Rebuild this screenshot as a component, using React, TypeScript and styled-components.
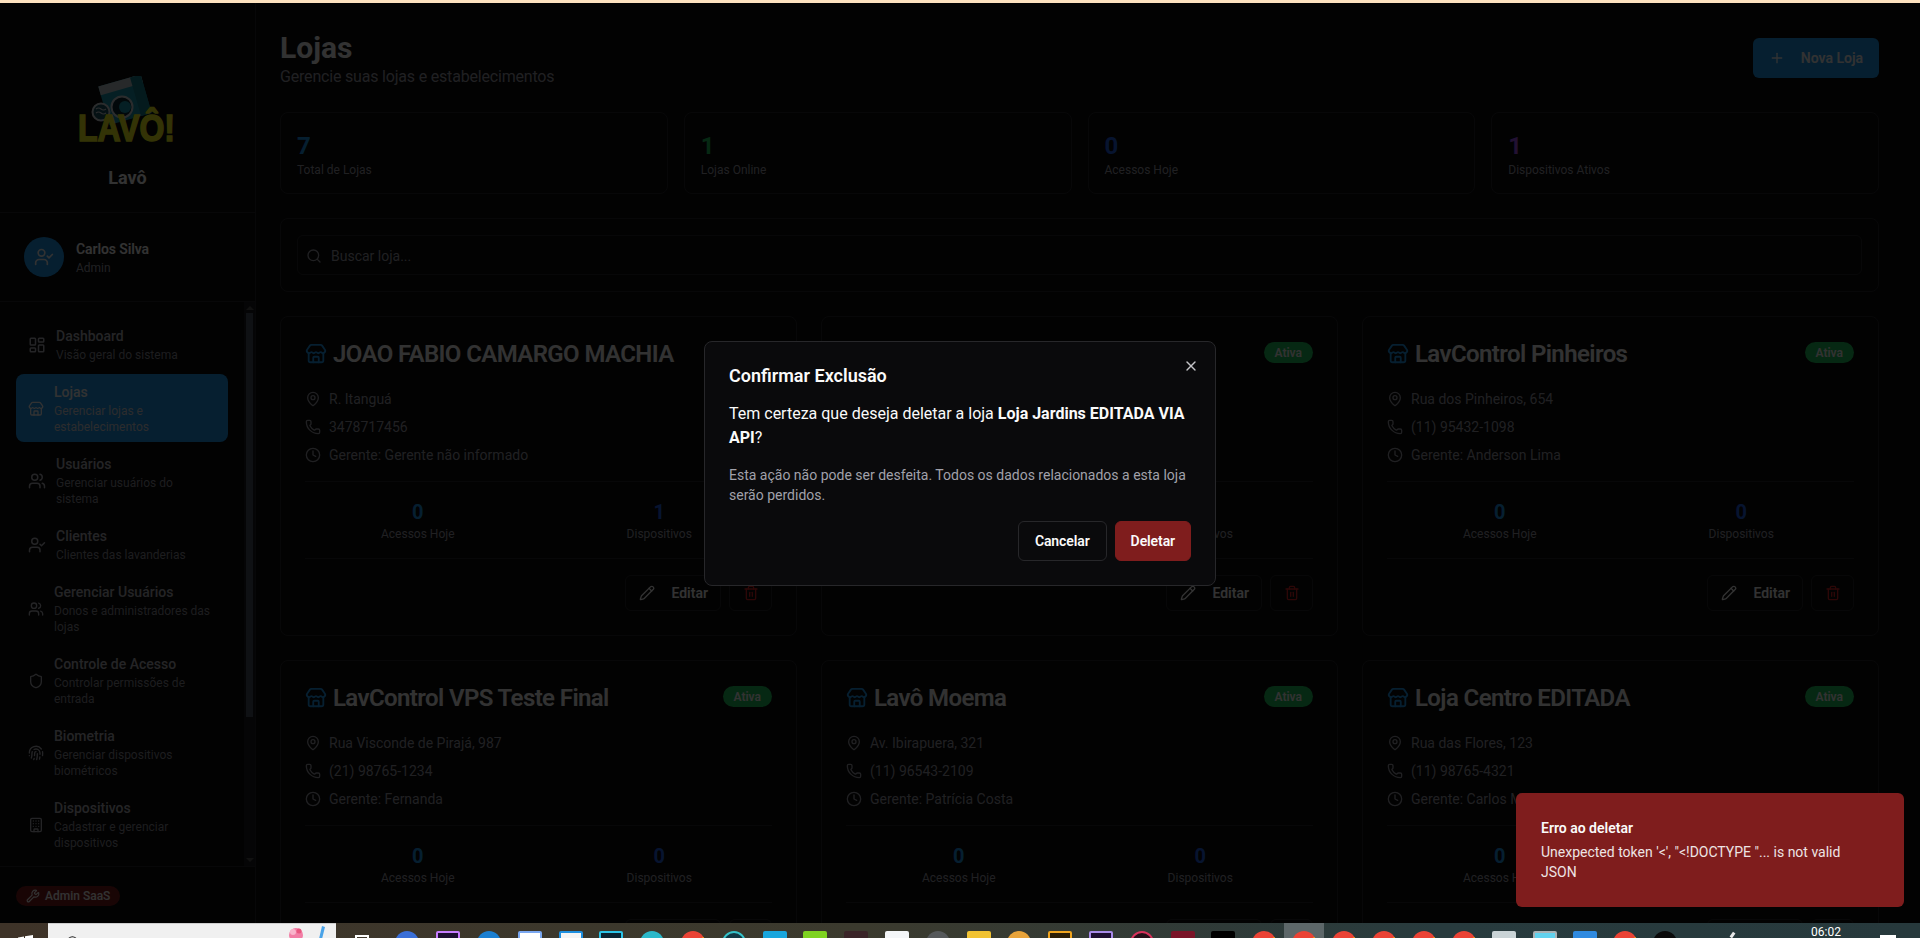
import * as React from "react";
import styled, { createGlobalStyle } from "styled-components";
import {
  Building, Clock, Fingerprint, LayoutDashboard, MapPin, Pencil, Phone, Plus, Search, Shield,
  Store, Trash2, UserCheck, Users, Wrench, X,
} from "lucide-react";

const uiFont = `Roboto, "Noto Sans", sans-serif`;

const GlobalStyle = createGlobalStyle`
  html, body {
    margin: 0;
    height: 100%;
    overflow: hidden;
    background: #000;
  }

  body {
    font-family: ${uiFont};
    color: #fafafa;
  }

  * {
    box-sizing: border-box;
  }
`;

const border = "#27272a";
const primary = "#1f9bf0";

const Desktop = styled.div`
  display: flex;
  flex-direction: column;
  height: 938px;
  overflow: hidden;
`;

const ChromeEdge = styled.div`
  flex: 0 0 3px;
  background: #fde2bf;
`;

const Viewport = styled.div`
  position: relative;
  flex: 1;
  min-height: 0;
  display: flex;
  overflow: hidden;
  background: #0a0a0b;
`;

/* sidebar */

const Sidebar = styled.aside`
  flex: 0 0 256px;
  display: flex;
  flex-direction: column;
  border-right: 1px solid ${border};
`;

const Brand = styled.div`
  display: flex;
  flex-direction: column;
  align-items: center;
  padding: 73px 0 20px;
  border-bottom: 1px solid ${border};
`;

const BrandName = styled.div`
  margin-top: 18px;
  font-size: 18px;
  line-height: 28px;
  font-weight: 700;
`;

const Profile = styled.div`
  display: flex;
  align-items: center;
  gap: 12px;
  padding: 24px;
  border-bottom: 1px solid ${border};
`;

const Avatar = styled.div`
  width: 40px;
  height: 40px;
  border-radius: 50%;
  background: ${primary};
  display: flex;
  align-items: center;
  justify-content: center;
`;

const ProfileName = styled.div`
  margin-top: 1px;
  font-size: 14px;
  line-height: 20px;
  font-weight: 600;
  letter-spacing: -0.1px;
`;

const ProfileRole = styled.div`
  font-size: 12px;
  line-height: 16px;
  margin-top: 1px;
  color: #a1a1aa;
`;

const NavArea = styled.div`
  flex: 1;
  min-height: 0;
  display: flex;
`;

const NavList = styled.nav`
  flex: 1;
  min-width: 0;
  display: flex;
  flex-direction: column;
  gap: 4px;
  padding: 16px 16px 8px;
  overflow: hidden;
`;

const NavItem = styled.a<{ $active?: boolean }>`
  display: flex;
  align-items: center;
  gap: 10px;
  padding: 8px 12px 7px;
  border-radius: 8px;
  color: ${props => (props.$active ? "#fafafa" : "#b6b6bd")};
  background: ${props => (props.$active ? primary : "transparent")};

  svg {
    flex: none;
  }
`;

const NavTitle = styled.div`
  font-size: 14px;
  line-height: 20px;
  font-weight: 500;
`;

const NavDesc = styled.div<{ $active?: boolean }>`
  margin-top: 1px;
  font-size: 12px;
  line-height: 16px;
  color: ${props => (props.$active ? "#d9d9de" : "#8f8f98")};
`;

const Rail = styled.div`
  flex: 0 0 11px;
  display: flex;
  flex-direction: column;
  align-items: center;
  background: #1d1d20;
`;

const RailArrow = styled.div<{ $down?: boolean }>`
  flex: 0 0 4px;
  width: 0;
  height: 0;
  border-left: 4px solid transparent;
  border-right: 4px solid transparent;
  ${props => (props.$down
    ? "border-top: 4px solid #555; margin-top: auto; margin-bottom: 4px;"
    : "border-bottom: 4px solid #555; margin: 4px 0 3px;")}
`;

const RailThumb = styled.div`
  width: 7px;
  height: 404px;
  background: #4d5566;
`;

const SidebarFoot = styled.div`
  flex: 0 0 57px;
  padding: 19px 16px 0;
  border-top: 1px solid ${border};
`;

const AdminPill = styled.span`
  display: inline-flex;
  align-items: center;
  gap: 5px;
  height: 20px;
  padding: 0 10px;
  border-radius: 10px;
  font-size: 12px;
  font-weight: 500;
  background: #7f1d1d;
`;

/* main */

const Main = styled.main`
  flex: 1;
  min-width: 0;
  padding: 25px 41px 0 24px;
  overflow: hidden;
`;

const PageHead = styled.header`
  display: flex;
  align-items: center;
  justify-content: space-between;
  margin-bottom: 24px;
`;

const PageTitle = styled.h1`
  margin: 2px 0 0;
  font-size: 30px;
  line-height: 35px;
  font-weight: 700;
`;

const PageSub = styled.p`
  margin: 0;
  font-size: 16px;
  line-height: 23px;
  letter-spacing: -0.19px;
  color: #a1a1aa;
`;

const PrimaryButton = styled.button`
  display: flex;
  align-items: center;
  gap: 16px;
  height: 40px;
  padding: 0 16px;
  border: 0;
  border-radius: 6px;
  background: ${primary};
  color: #fafafa;
  font: 600 14px ${uiFont};
`;

const StatGrid = styled.section`
  display: grid;
  grid-template-columns: repeat(4, 1fr);
  gap: 16px;
  margin-bottom: 24px;
`;

const Panel = styled.div`
  border: 1px solid ${border};
  border-radius: 8px;
`;

const StatCard = styled(Panel)`
  padding: 17px 16px 15px;
`;

const StatValue = styled.div<{ $color: string }>`
  font-size: 24px;
  line-height: 32px;
  font-weight: 700;
  color: ${props => props.$color};
`;

const StatLabel = styled.div`
  font-size: 12px;
  line-height: 16px;
  color: #a1a1aa;
`;

const SearchPanel = styled(Panel)`
  padding: 16px;
  margin-bottom: 24px;
`;

const SearchField = styled.div`
  display: flex;
  align-items: center;
  gap: 9px;
  height: 40px;
  padding: 1px 8px 0;
  border: 1px solid ${border};
  border-radius: 6px;
  font-size: 14px;
  color: #a1a1aa;
`;

const StoreGrid = styled.section`
  display: grid;
  grid-template-columns: repeat(3, 1fr);
  gap: 24px;
`;

const StoreCard = styled(Panel)`
  height: 320px;
  padding: 25px 24px 24px;
`;

const StoreHead = styled.div`
  display: flex;
  align-items: flex-start;
  justify-content: space-between;
  height: 24px;
  margin-bottom: 23px;
`;

const StoreTitle = styled.h3`
  display: flex;
  align-items: center;
  gap: 6px;
  margin: 0;
  font-size: 24px;
  line-height: 24px;
  font-weight: 600;
  letter-spacing: -0.6px;
  white-space: nowrap;

  svg {
    color: ${primary};
    flex: none;
  }
`;

const Badge = styled.span`
  height: 21px;
  padding: 1px 11px 0;
  border-radius: 11px;
  font-size: 12px;
  line-height: 20px;
  font-weight: 600;
  background: #22c55e;
`;

const InfoList = styled.div`
  display: flex;
  flex-direction: column;
  gap: 8px;
`;

const InfoRow = styled.div`
  display: flex;
  align-items: center;
  gap: 8px;
  font-size: 14px;
  line-height: 20px;
  color: #a1a1aa;
`;

const Figures = styled.div`
  display: grid;
  grid-template-columns: 1fr 1fr;
  gap: 16px;
  margin-top: 16px;
  padding: 16px 0;
  border-top: 1px solid ${border};
  border-bottom: 1px solid ${border};
  text-align: center;
`;

const FigureValue = styled.div<{ $color: string }>`
  font-size: 20px;
  line-height: 28px;
  font-weight: 700;
  color: ${props => props.$color};
`;

const FigureLabel = styled.div`
  font-size: 12px;
  line-height: 16px;
  color: #a1a1aa;
`;

const CardActions = styled.div`
  display: flex;
  justify-content: flex-end;
  gap: 8px;
  padding-top: 16px;
`;

const OutlineButton = styled.button<{ $danger?: boolean }>`
  display: flex;
  align-items: center;
  gap: 16px;
  height: 36px;
  padding: 0 12px 0 13px;
  background: transparent;
  border: 1px solid ${border};
  border-radius: 6px;
  color: ${props => (props.$danger ? "#dc2626" : "#fafafa")};
  font: 600 14px ${uiFont};
`;

/* overlay */

const Backdrop = styled.div`
  position: absolute;
  inset: 0;
  display: flex;
  align-items: center;
  justify-content: center;
  background: rgba(0, 0, 0, 0.8);
`;

const Dialog = styled.div`
  position: relative;
  width: 512px;
  padding: 24px;
  background: #0a0a0c;
  border: 1px solid ${border};
  border-radius: 8px;
`;

const DialogClose = styled.span`
  position: absolute;
  top: 16px;
  right: 16px;
  display: flex;
  color: #c4c4c8;
`;

const DialogTitle = styled.h2`
  margin: 0 0 16px;
  font-size: 18px;
  line-height: 20px;
  font-weight: 600;
`;

const DialogText = styled.p`
  margin: 0;
  font-size: 16px;
  line-height: 24px;

  strong {
    font-weight: 700;
  }
`;

const DialogNote = styled.p`
  margin: 15px 0 15px;
  font-size: 14px;
  line-height: 20.5px;
  color: #a1a1aa;
`;

const DialogActions = styled.div`
  display: flex;
  justify-content: flex-end;
  gap: 8px;
`;

const DialogButton = styled.button<{ $danger?: boolean }>`
  height: 40px;
  padding: 0 ${props => (props.$danger ? 15 : 16)}px;
  border: 1px solid ${props => (props.$danger ? "#7f1d1d" : border)};
  border-radius: 6px;
  background: ${props => (props.$danger ? "#7f1d1d" : "transparent")};
  color: #fafafa;
  font: 600 14px ${uiFont};
  letter-spacing: -0.1px;
`;

const Toast = styled.div`
  position: absolute;
  right: 16px;
  bottom: 16px;
  width: 388px;
  padding: 25px;
  border-radius: 6px;
  background: #7f1d1d;
  font-size: 14px;
  line-height: 20px;
`;

const ToastTitle = styled.div`
  font-weight: 600;
  margin-bottom: 4px;
`;

const ToastText = styled.div`
  opacity: 0.9;
`;

/* taskbar */

const Taskbar = styled.footer`
  flex: 0 0 15px;
  display: flex;
  overflow: hidden;
  background: linear-gradient(90deg, #3e3328 0%, #3b3a2e 45%, #283b3e 75%, #27393c 100%);
`;

const StartSlot = styled.div`
  flex: 0 0 48px;
  padding: 12px 0 0 18px;
`;

const SearchBox = styled.div`
  flex: 0 0 288px;
  display: flex;
  align-items: flex-start;
  padding: 11px 0 0 18px;
  background: #f0f0f0;
  border-top: 1px solid #cfcfcf;
`;

const TaskSlot = styled.div<{ $w: number; $active?: boolean }>`
  flex: 0 0 ${props => props.$w}px;
  display: flex;
  justify-content: center;
  padding-top: 8px;
  background: ${props => (props.$active ? "#5d6769" : "transparent")};
`;

const TaskView = styled.div`
  flex: none;
  width: 14px;
  height: 24px;
  margin-top: 4px;
  border: 2px solid #fff;
`;

const TaskGlyph = styled.div<{ $bg: string; $line?: string; $round?: boolean }>`
  flex: none;
  width: 24px;
  height: 24px;
  background: ${props => props.$bg};
  border: ${props => (props.$line ? `2px solid ${props.$line}` : "0")};
  border-radius: ${props => (props.$round ? "50%" : "2px")};
`;

const Tray = styled.div`
  margin-left: auto;
  display: flex;
  align-items: flex-start;
`;

const TrayPen = styled.div`
  width: 3px;
  height: 6px;
  margin: 9px 72px 0 0;
  background: #e8e8e8;
  transform: rotate(35deg);
`;

const ClockText = styled.div`
  width: 40px;
  margin-right: 34px;
  font-size: 12px;
  line-height: 16px;
  margin-top: 1px;
  text-align: center;
  color: #fff;
`;

const NotifyBox = styled.div`
  width: 16px;
  height: 4px;
  margin: 12px 24px 0 0;
  background: #fff;
`;

function LavoLogo() {
  return (
    <svg width="100" height="70" viewBox="0 0 100 70">
      <g transform="rotate(-16 46 24)">
        <rect x="25" y="4" width="44" height="40" fill="#1c9db3" />
        <rect x="25" y="4" width="44" height="9" fill="#c4ced1" />
        <rect x="58" y="4" width="11" height="40" fill="#17808f" />
      </g>
      <circle cx="44" cy="31" r="10.5" fill="#0d2b33" stroke="#d7dde0" strokeWidth="2" />
      <circle cx="47" cy="31" r="6" fill="#1c9db3" />
      <circle cx="23" cy="36" r="8.5" fill="#1b5563" stroke="#d7dde0" strokeWidth="2" />
      <path d="M18 33q2.5-2 5 0t5 0M18 37q2.5-2 5 0t5 0" fill="none" stroke="#d7dde0" strokeWidth="1.2" />
      <text
        x="0"
        y="65"
        fontFamily="'Liberation Sans', sans-serif"
        fontWeight="700"
        fontSize="36"
        textLength="97"
        lengthAdjust="spacingAndGlyphs"
        fill="#ffff20"
        stroke="#ffff20"
        strokeWidth="1.5"
      >
        LAVÔ!
      </text>
    </svg>
  );
}

function ChromeGlyph() {
  return (
    <svg width="24" height="24" viewBox="0 0 24 24">
      <circle cx="12" cy="12" r="12" fill="#ea4335" />
      <path d="M12 12l10.4-6A12 12 0 0 1 24 12a12 12 0 0 1-12 12z" fill="#fbbc05" />
      <circle cx="12" cy="12" r="5" fill="#fff" />
    </svg>
  );
}

function WindowsGlyph() {
  return (
    <svg width="15" height="15" viewBox="0 0 15 15" fill="#fff" style={{ display: "block" }}>
      <path d="M0 2.5l6-1V7H0zM7 1.3L15 0v7H7z" />
    </svg>
  );
}

function BingDoodle() {
  return (
    <svg width="42" height="15" viewBox="0 0 42 15" style={{ marginLeft: "auto", marginTop: -10, marginRight: 9 }}>
      <circle cx="11" cy="10" r="7" fill="#f27da5" />
      <circle cx="8" cy="7" r="3" fill="#f9b4cb" />
      <circle cx="14" cy="6" r="2.5" fill="#e8577f" />
      <path d="M37 1l3 1-3 12h-3z" fill="#4aa3e8" />
    </svg>
  );
}

type NavEntry = { icon: typeof Store, size: number, title: string, desc: string, active?: boolean };

const navItems: NavEntry[] = [
  { icon: LayoutDashboard, size: 18, title: "Dashboard", desc: "Visão geral do sistema" },
  { icon: Store, size: 16, title: "Lojas", desc: "Gerenciar lojas e estabelecimentos", active: true },
  { icon: Users, size: 18, title: "Usuários", desc: "Gerenciar usuários do sistema" },
  { icon: UserCheck, size: 18, title: "Clientes", desc: "Clientes das lavanderias" },
  { icon: Users, size: 16, title: "Gerenciar Usuários", desc: "Donos e administradores das lojas" },
  { icon: Shield, size: 16, title: "Controle de Acesso", desc: "Controlar permissões de entrada" },
  { icon: Fingerprint, size: 16, title: "Biometria", desc: "Gerenciar dispositivos biométricos" },
  { icon: Building, size: 16, title: "Dispositivos", desc: "Cadastrar e gerenciar dispositivos" },
];

const stats = [
  { value: "7", label: "Total de Lojas", color: "#1f9bf0" },
  { value: "1", label: "Lojas Online", color: "#22c55e" },
  { value: "0", label: "Acessos Hoje", color: "#2563eb" },
  { value: "1", label: "Dispositivos Ativos", color: "#a855f7" },
];

const stores = [
  { name: "JOAO FABIO CAMARGO MACHIA", address: "R. Itanguá", phone: "3478717456", manager: "Gerente não informado", devices: 1 },
  { name: "Loja Jardins EDITADA VIA API", address: "Alameda Santos, 456", phone: "(11) 97654-3210", manager: "Roberto Alves", devices: 0 },
  { name: "LavControl Pinheiros", address: "Rua dos Pinheiros, 654", phone: "(11) 95432-1098", manager: "Anderson Lima", devices: 0 },
  { name: "LavControl VPS Teste Final", address: "Rua Visconde de Pirajá, 987", phone: "(21) 98765-1234", manager: "Fernanda", devices: 0 },
  { name: "Lavô Moema", address: "Av. Ibirapuera, 321", phone: "(11) 96543-2109", manager: "Patrícia Costa", devices: 0 },
  { name: "Loja Centro EDITADA", address: "Rua das Flores, 123", phone: "(11) 98765-4321", manager: "Carlos Mendes", devices: 0 },
];

type TaskEntry = { w: number, bg?: string, line?: string, round?: boolean, chrome?: boolean, active?: boolean };

const narrow = 40;
const wide = 40.8;

const taskIcons: TaskEntry[] = [
  { w: wide, bg: "#3a6fd8", round: true },
  { w: wide, bg: "#1e0f33", line: "#c77dff" },
  { w: wide, bg: "#1b7fd1", round: true },
  { w: wide, bg: "#ffffff", line: "#7aa7f0" },
  { w: wide, bg: "#f4f4f4", line: "#1d8fe0" },
  { w: wide, bg: "#0a2433", line: "#2bc4e8" },
  { w: wide, bg: "#2bb8c9", round: true },
  { w: wide, chrome: true },
  { w: wide, bg: "#123a46", line: "#35c2c9", round: true },
  { w: wide, bg: "#19a6dd" },
  { w: wide, bg: "#7ed321" },
  { w: wide, bg: "#3a2428" },
  { w: wide, bg: "#f4f6f8" },
  { w: wide, bg: "#55585a", round: true },
  { w: wide, bg: "#f1c232" },
  { w: wide, bg: "#e8a33a", round: true },
  { w: wide, bg: "#2b1d05", line: "#f0a41e" },
  { w: wide, bg: "#1e0f33", line: "#a88bea" },
  { w: wide, bg: "#261019", line: "#d8315b", round: true },
  { w: wide, bg: "#7a1428" },
  { w: wide, bg: "#000000" },
  { w: narrow, chrome: true },
  { w: narrow, chrome: true, active: true },
  { w: narrow, chrome: true },
  { w: narrow, chrome: true },
  { w: narrow, chrome: true },
  { w: narrow, chrome: true },
  { w: wide, bg: "#c9d3d6" },
  { w: wide, bg: "#62d2ee", line: "#a9b2b5" },
  { w: narrow, bg: "#2f8ae0" },
  { w: narrow, chrome: true },
  { w: narrow, bg: "#0a0a0a", round: true },
];

function StoreTile({ store }: { store: typeof stores[number] }) {
  return (
    <StoreCard>
      <StoreHead>
        <StoreTitle>
          <Store size={22} />
          {store.name}
        </StoreTitle>
        <Badge>Ativa</Badge>
      </StoreHead>
      <InfoList>
        <InfoRow><MapPin size={16} />{store.address}</InfoRow>
        <InfoRow><Phone size={16} />{store.phone}</InfoRow>
        <InfoRow><Clock size={16} />Gerente: {store.manager}</InfoRow>
      </InfoList>
      <Figures>
        <div>
          <FigureValue $color="#1f9bf0">0</FigureValue>
          <FigureLabel>Acessos Hoje</FigureLabel>
        </div>
        <div>
          <FigureValue $color="#2563eb">{store.devices}</FigureValue>
          <FigureLabel>Dispositivos</FigureLabel>
        </div>
      </Figures>
      <CardActions>
        <OutlineButton><Pencil size={16} />Editar</OutlineButton>
        <OutlineButton $danger={true}><Trash2 size={16} /></OutlineButton>
      </CardActions>
    </StoreCard>
  );
}

export default function App() {
  return (
    <Desktop>
      <GlobalStyle />
      <ChromeEdge />
      <Viewport>
        <Sidebar>
          <Brand>
            <LavoLogo />
            <BrandName>Lavô</BrandName>
          </Brand>
          <Profile>
            <Avatar><UserCheck size={20} /></Avatar>
            <div>
              <ProfileName>Carlos Silva</ProfileName>
              <ProfileRole>Admin</ProfileRole>
            </div>
          </Profile>
          <NavArea>
            <NavList>
              {navItems.map(item => (
                <NavItem key={item.title} $active={item.active}>
                  <item.icon size={item.size} />
                  <div>
                    <NavTitle>{item.title}</NavTitle>
                    <NavDesc $active={item.active}>{item.desc}</NavDesc>
                  </div>
                </NavItem>
              ))}
            </NavList>
            <Rail>
              <RailArrow />
              <RailThumb />
              <RailArrow $down={true} />
            </Rail>
          </NavArea>
          <SidebarFoot>
            <AdminPill><Wrench size={14} />Admin SaaS</AdminPill>
          </SidebarFoot>
        </Sidebar>

        <Main>
          <PageHead>
            <div>
              <PageTitle>Lojas</PageTitle>
              <PageSub>Gerencie suas lojas e estabelecimentos</PageSub>
            </div>
            <PrimaryButton><Plus size={16} />Nova Loja</PrimaryButton>
          </PageHead>
          <StatGrid>
            {stats.map(stat => (
              <StatCard key={stat.label}>
                <StatValue $color={stat.color}>{stat.value}</StatValue>
                <StatLabel>{stat.label}</StatLabel>
              </StatCard>
            ))}
          </StatGrid>
          <SearchPanel>
            <SearchField>
              <Search size={16} color="#a1a1aa" />
              Buscar loja...
            </SearchField>
          </SearchPanel>
          <StoreGrid>
            {stores.map(store => <StoreTile key={store.name} store={store} />)}
          </StoreGrid>
        </Main>

        <Backdrop>
          <Dialog>
            <DialogClose><X size={16} /></DialogClose>
            <DialogTitle>Confirmar Exclusão</DialogTitle>
            <DialogText>
              Tem certeza que deseja deletar a loja <strong>Loja Jardins EDITADA VIA API</strong>?
            </DialogText>
            <DialogNote>
              Esta ação não pode ser desfeita. Todos os dados relacionados a esta loja serão perdidos.
            </DialogNote>
            <DialogActions>
              <DialogButton>Cancelar</DialogButton>
              <DialogButton $danger={true}>Deletar</DialogButton>
            </DialogActions>
          </Dialog>
        </Backdrop>

        <Toast>
          <ToastTitle>Erro ao deletar</ToastTitle>
          <ToastText>Unexpected token '&lt;', "&lt;!DOCTYPE "... is not valid JSON</ToastText>
        </Toast>
      </Viewport>

      <Taskbar>
        <StartSlot><WindowsGlyph /></StartSlot>
        <SearchBox>
          <Search size={14} color="#222" />
          <BingDoodle />
        </SearchBox>
        <TaskSlot $w={51}>
          <TaskView />
        </TaskSlot>
        {taskIcons.map((icon, i) => (
          <TaskSlot key={i} $w={icon.w} $active={icon.active}>
            {icon.chrome ? <ChromeGlyph /> : <TaskGlyph $bg={icon.bg || "#000"} $line={icon.line} $round={icon.round} />}
          </TaskSlot>
        ))}
        <Tray>
          <TrayPen />
          <ClockText>06:02</ClockText>
          <NotifyBox />
        </Tray>
      </Taskbar>
    </Desktop>
  );
}
